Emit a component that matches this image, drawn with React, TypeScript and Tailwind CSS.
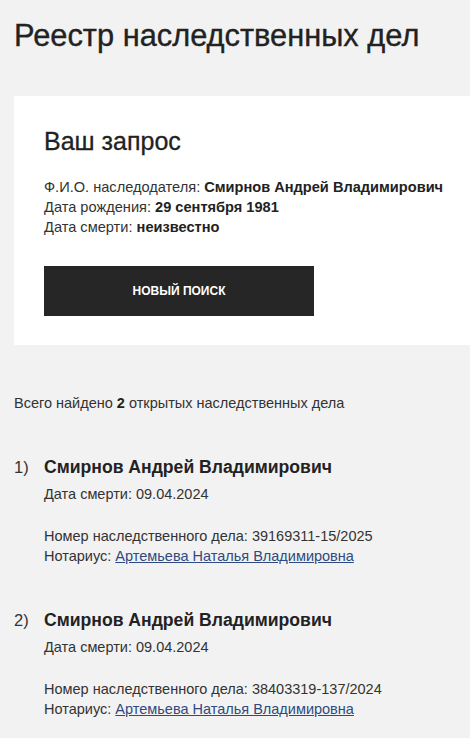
const font = { fontFamily: '"Liberation Sans", Arial, sans-serif' }

type Case = {
  num: string
  name: string
  death: string
  caseNo: string
  notary: string
}

const cases: Case[] = [
  {
    num: "1)",
    name: "Смирнов Андрей Владимирович",
    death: "09.04.2024",
    caseNo: "39169311-15/2025",
    notary: "Артемьева Наталья Владимировна",
  },
  {
    num: "2)",
    name: "Смирнов Андрей Владимирович",
    death: "09.04.2024",
    caseNo: "38403319-137/2024",
    notary: "Артемьева Наталья Владимировна",
  },
]

export default function App() {
  return (
    <div className="min-h-screen bg-[#f2f2f2] text-[#222]" style={font}>
      <div className="pl-[14px] pt-[18px]">
        <h1 className="text-[30.8px] leading-[36px] font-normal [-webkit-text-stroke:0.35px_#222]">
          Реестр наследственных дел
        </h1>

        {/* Request card */}
        <section className="mt-[42px] bg-white pl-[30px] pt-[30px] pb-[29px]">
          <h2 className="text-[25px] leading-[30px] font-normal [-webkit-text-stroke:0.3px_#222]">Ваш запрос</h2>
          <div className="mt-[21px] text-[14.6px] leading-[20px] text-[#333]">
            <p>
              Ф.И.О. наследодателя: <b className="text-[#222]">Смирнов Андрей Владимирович</b>
            </p>
            <p>
              Дата рождения: <b className="text-[#222]">29 сентября 1981</b>
            </p>
            <p>
              Дата смерти: <b className="text-[#222]">неизвестно</b>
            </p>
          </div>
          <button className="mt-[29px] flex h-[50px] w-[270px] items-center justify-center bg-[#262626] text-[12px] font-bold uppercase text-white">
            Новый поиск
          </button>
        </section>

        <p className="mt-[48px] text-[14.5px] leading-[20px] text-[#333]">
          Всего найдено <b className="text-[#222]">2</b> открытых наследственных дела
        </p>

        <div className="mt-[42px] flex flex-col gap-[42px]">
          {cases.map((c, i) => (
            <div key={i} className="flex">
              <div className="w-[30px] text-[16.5px] leading-[24px] text-[#333]">{c.num}</div>
              <div>
                <div className="text-[17.6px] leading-[24px] font-bold">{c.name}</div>
                <div className="mt-[5px] text-[14.5px] leading-[20px] text-[#333]">Дата смерти: {c.death}</div>
                <div className="mt-[22px] text-[14.5px] leading-[20px] text-[#333]">
                  <p>Номер наследственного дела: {c.caseNo}</p>
                  <p>
                    Нотариус:{" "}
                    <a href="#" className="text-[#2f4a80] underline">
                      {c.notary}
                    </a>
                  </p>
                </div>
              </div>
            </div>
          ))}
        </div>
      </div>
    </div>
  )
}
